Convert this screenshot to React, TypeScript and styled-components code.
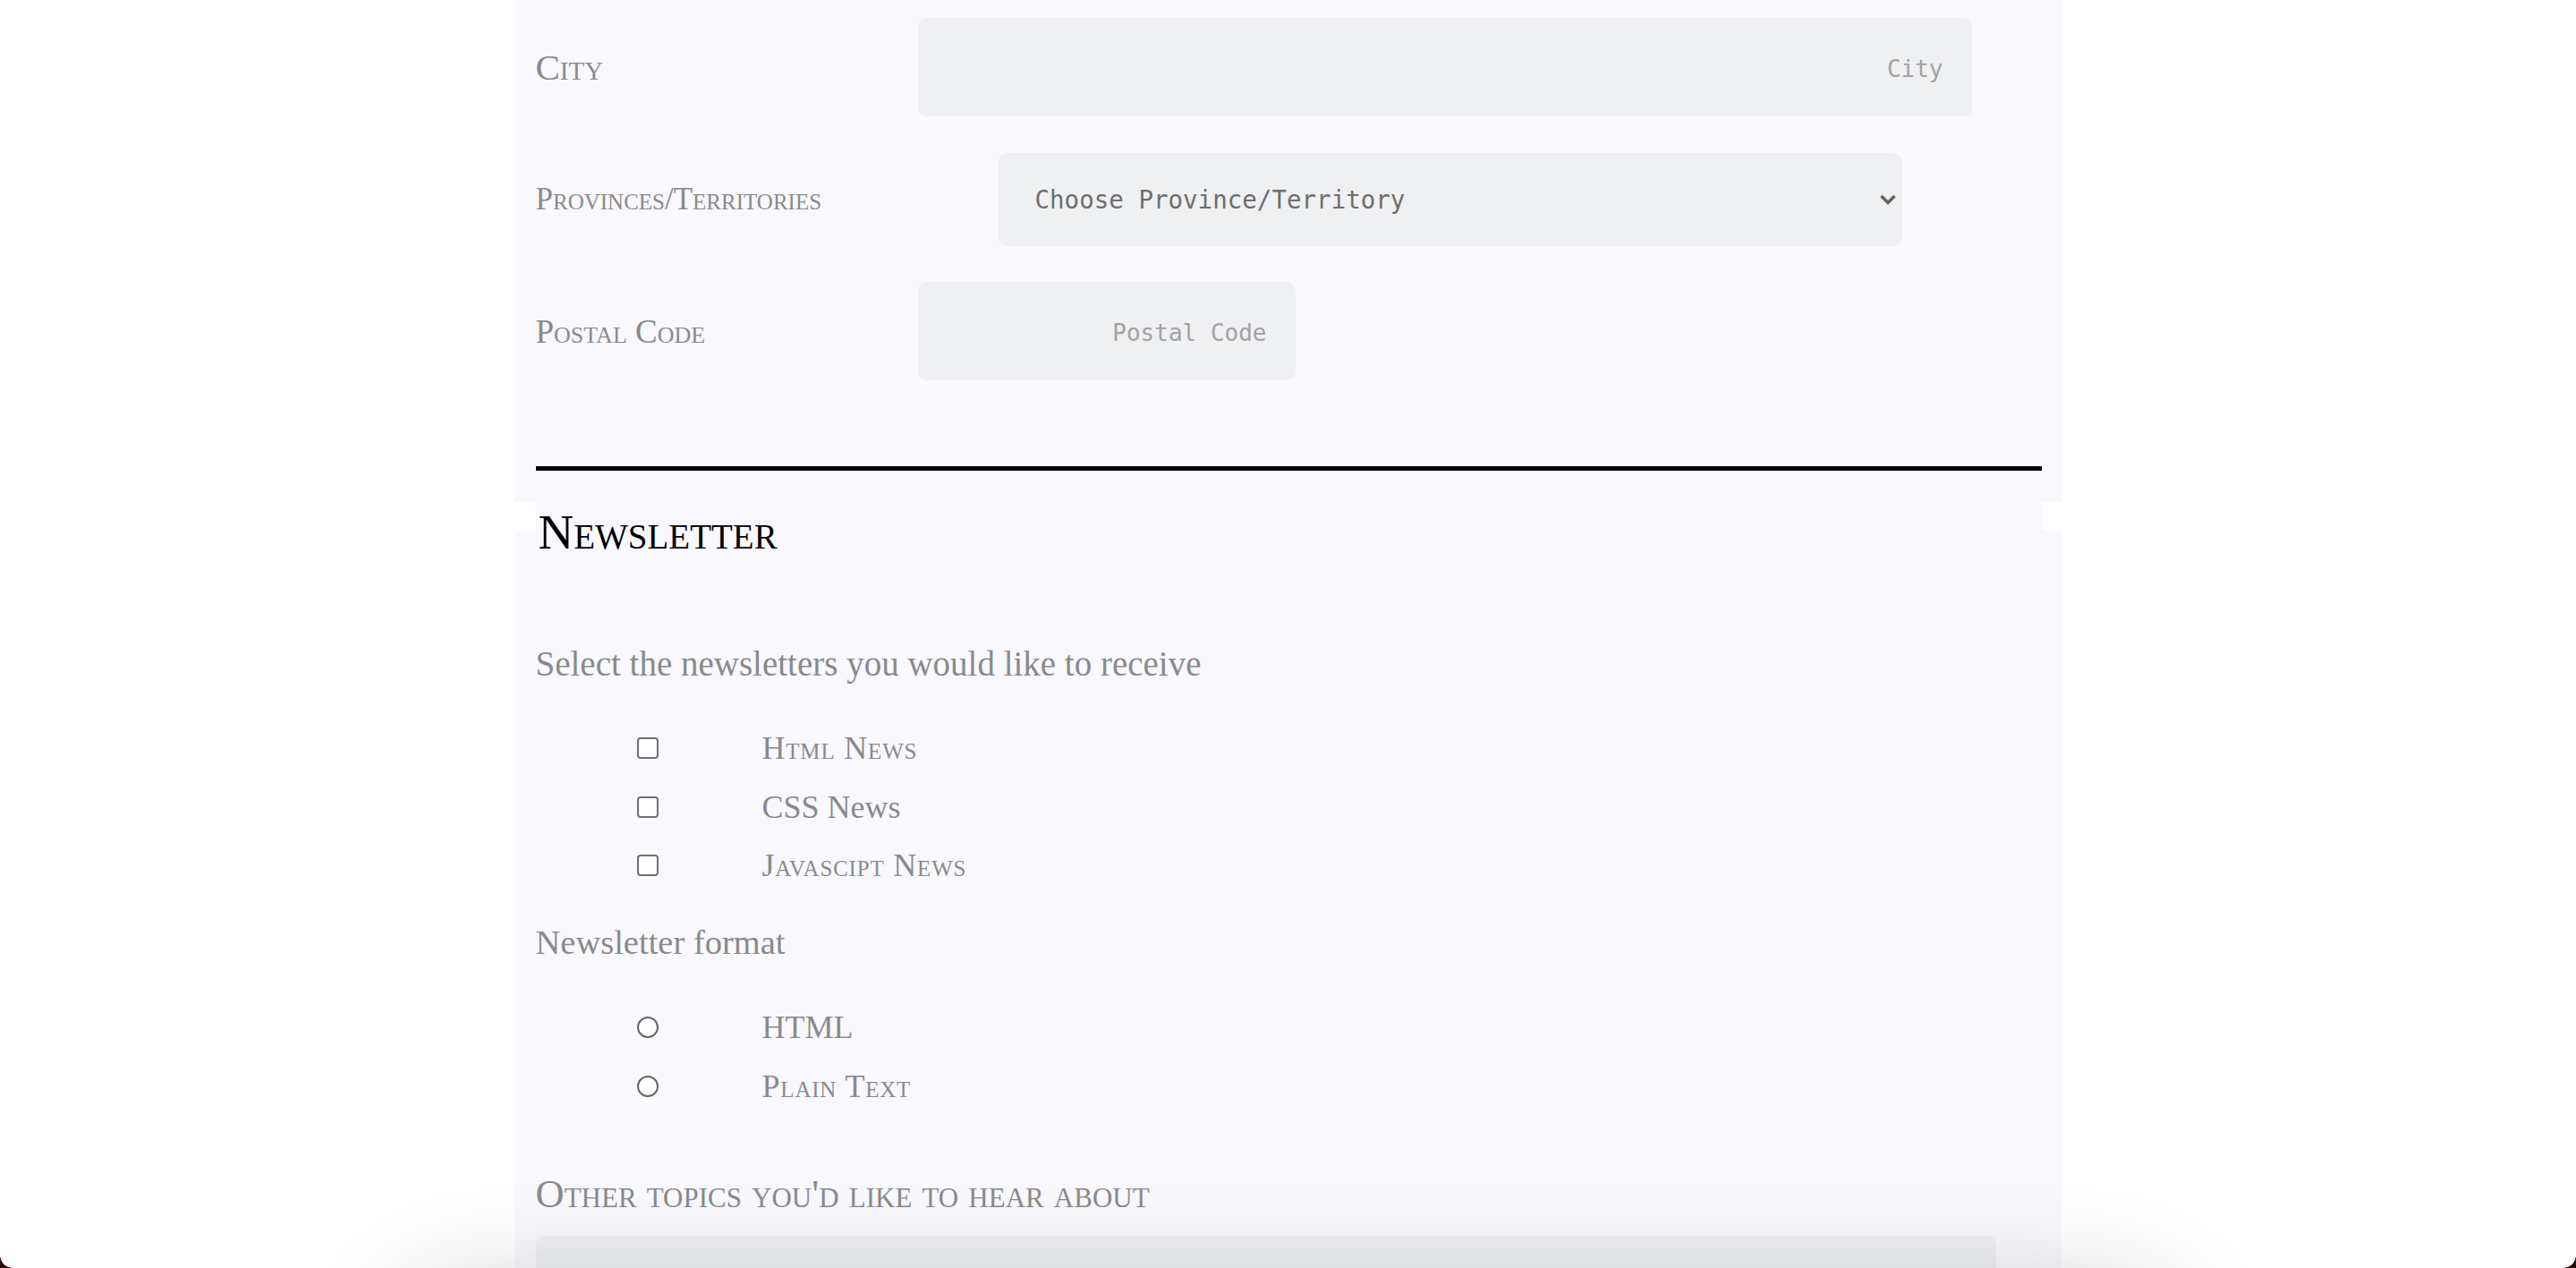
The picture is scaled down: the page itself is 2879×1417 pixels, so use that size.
import React from "react";
import styled, { createGlobalStyle } from "styled-components";

const GlobalStyle = createGlobalStyle`
  html, body {
    margin: 0;
    padding: 0;
    background: #ffffff;
    overflow: hidden;
  }
`;

const Panel = styled.main`
  width: 1728px;
  margin: 0 auto;
  box-sizing: border-box;
  padding: 20px 22px 0 23px;
  background: #f8f8fd;
  min-height: 1700px;
`;

const AddressFields = styled.div`
  display: flex;
  flex-direction: column;
  gap: 40.5px;
`;

const FieldRow = styled.div`
  display: grid;
  grid-template-columns: 427px auto;
  align-items: center;
  justify-items: start;
`;

const FieldLabel = styled.label<{ $size: number }>`
  font-family: "Liberation Serif", serif;
  font-variant: small-caps;
  font-size: ${(p) => p.$size}px;
  line-height: 1;
  color: #8a8a8a;
`;

const TextInput = styled.input<{ $width: number }>`
  width: ${(p) => p.$width}px;
  height: 110px;
  box-sizing: border-box;
  border: none;
  outline: none;
  border-radius: 10px;
  background: #eff0f2;
  font-family: "DejaVu Sans Mono", monospace;
  font-size: 26px;
  text-align: right;
  padding: 4px 32px 0;
  color: #555;
  &::placeholder {
    color: #a2a2a2;
  }
`;

const SelectWrap = styled.div`
  position: relative;
  margin-left: 90px;
  width: 1010px;
`;

const Select = styled.select`
  appearance: none;
  -webkit-appearance: none;
  width: 100%;
  height: 104px;
  border: none;
  outline: none;
  border-radius: 10px;
  background: #eff0f2;
  font-family: "DejaVu Sans Mono", monospace;
  font-size: 27.5px;
  color: #6e6e6e;
  padding: 0 0 0 41px;
`;

const Chevron = styled.svg`
  position: absolute;
  right: 6px;
  top: 50%;
  transform: translateY(-50%);
  width: 20px;
  height: 13px;
  pointer-events: none;
`;

const Rule = styled.hr`
  margin: 96px 0 0;
  border: none;
  height: 5px;
  background: #000;
`;

const HeadingWrap = styled.div`
  position: relative;
  margin-top: 35px;
  padding-top: 6px;
  &::before,
  &::after {
    content: "";
    position: absolute;
    top: 0;
    height: 32px;
    background: #ffffff;
  }
  &::before {
    left: -23px;
    width: 23px;
  }
  &::after {
    right: -22px;
    width: 22px;
  }
`;

const Heading = styled.h2`
  margin: 0;
  font-family: "Liberation Serif", serif;
  font-variant: small-caps;
  font-weight: 400;
  font-size: 55px;
  line-height: 55px;
  color: #000;
  padding-left: 3px;
`;

const Prompt = styled.p<{ $top: number; $size: number }>`
  margin: ${(p) => p.$top}px 0 0;
  font-family: "Liberation Serif", serif;
  font-size: ${(p) => p.$size}px;
  line-height: 44px;
  color: #8a8a8a;
`;

const OptionList = styled.div<{ $top: number; $gap: number }>`
  display: flex;
  flex-direction: column;
  gap: ${(p) => p.$gap}px;
  margin-top: ${(p) => p.$top}px;
`;

const OptionRow = styled.label`
  display: flex;
  align-items: center;
  height: 42px;
  padding-left: 113px;
  font-family: "Liberation Serif", serif;
  font-size: 36px;
  line-height: 42px;
  color: #8a8a8a;
`;

const OptionText = styled.span<{ $caps?: boolean }>`
  margin-left: 116px;
  font-variant: ${(p) => (p.$caps ? "normal" : "small-caps")};
  letter-spacing: ${(p) => (p.$caps ? "0" : "0.8px")};
`;

const Box = styled.input`
  appearance: none;
  -webkit-appearance: none;
  margin: 0;
  width: 24px;
  height: 24px;
  box-sizing: border-box;
  border: 2px solid #707070;
  border-radius: 4px;
  background: #fff;
  flex: none;
`;

const Round = styled(Box)`
  border-width: 2px;
  border-color: #666;
  border-radius: 50%;
`;

const TopicsLabel = styled.p`
  margin: 75px 0 0;
  font-family: "Liberation Serif", serif;
  font-variant: small-caps;
  font-size: 44.5px;
  line-height: 48px;
  color: #8a8a8a;
`;

const TopicsArea = styled.textarea`
  display: block;
  margin-top: 23px;
  width: 1632px;
  height: 220px;
  box-sizing: border-box;
  border: none;
  outline: none;
  resize: none;
  border-radius: 10px;
  background: #eff0f2;
`;

const BottomShade = styled.div`
  position: fixed;
  left: 470px;
  right: 470px;
  top: 1470px;
  height: 200px;
  border-radius: 60px;
  box-shadow: 0 0 120px 30px rgba(0, 0, 0, 0.2);
  pointer-events: none;
`;

const Corner = styled.div<{ $side: "left" | "right" }>`
  position: fixed;
  bottom: 0;
  ${(p) => p.$side}: 0;
  width: 14px;
  height: 14px;
  background: radial-gradient(
    circle at ${(p) => (p.$side === "left" ? "100% 0" : "0 0")},
    transparent 13.5px,
    #2b0b0b 14px
  );
  pointer-events: none;
`;

export default function App() {
  return (
    <>
      <GlobalStyle />
      <Panel>
        <AddressFields>
          <FieldRow>
            <FieldLabel $size={41} htmlFor="city">City</FieldLabel>
            <TextInput id="city" $width={1178} placeholder="City" />
          </FieldRow>
          <FieldRow>
            <FieldLabel $size={35} htmlFor="prov">Provinces/Territories</FieldLabel>
            <SelectWrap>
              <Select id="prov" defaultValue="">
                <option value="">Choose Province/Territory</option>
              </Select>
              <Chevron viewBox="0 0 20 13">
                <path d="M2.5 2.5 L10 10 L17.5 2.5" fill="none" stroke="#646464" strokeWidth="3.6" />
              </Chevron>
            </SelectWrap>
          </FieldRow>
          <FieldRow>
            <FieldLabel $size={37} htmlFor="postal">Postal Code</FieldLabel>
            <TextInput id="postal" $width={422} placeholder="Postal Code" />
          </FieldRow>
        </AddressFields>

        <Rule />

        <HeadingWrap>
          <Heading>Newsletter</Heading>
        </HeadingWrap>

        <Prompt $top={98} $size={39}>Select the newsletters you would like to receive</Prompt>
        <OptionList $top={51} $gap={23.5}>
          <OptionRow>
            <Box type="checkbox" />
            <OptionText>Html News</OptionText>
          </OptionRow>
          <OptionRow>
            <Box type="checkbox" />
            <OptionText $caps>CSS News</OptionText>
          </OptionRow>
          <OptionRow>
            <Box type="checkbox" />
            <OptionText>Javascipt News</OptionText>
          </OptionRow>
        </OptionList>

        <Prompt $top={43} $size={38.5}>Newsletter format</Prompt>
        <OptionList $top={52} $gap={24}>
          <OptionRow>
            <Round type="radio" name="format" />
            <OptionText $caps>HTML</OptionText>
          </OptionRow>
          <OptionRow>
            <Round type="radio" name="format" />
            <OptionText>Plain Text</OptionText>
          </OptionRow>
        </OptionList>

        <TopicsLabel>Other topics you'd like to hear about</TopicsLabel>
        <TopicsArea />
      </Panel>
      <BottomShade />
      <Corner $side="left" />
      <Corner $side="right" />
    </>
  );
}
